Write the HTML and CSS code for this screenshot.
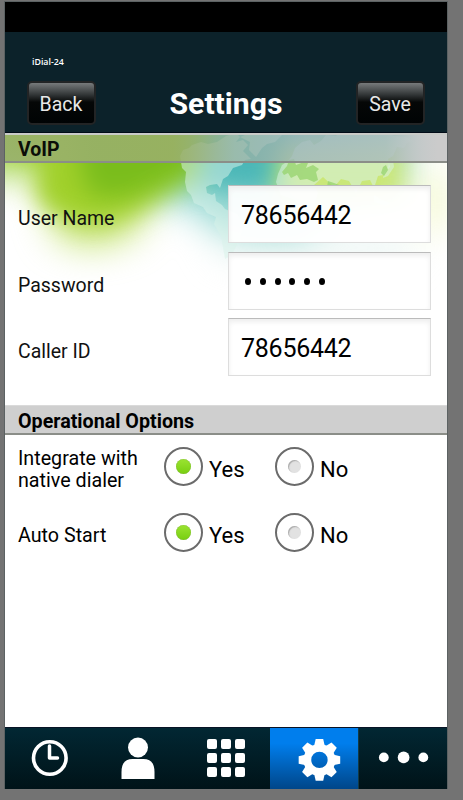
FILE: index.html
```html
<!DOCTYPE html>
<html lang="en">
<head>
<meta charset="utf-8">
<title>Settings</title>
<link rel="stylesheet" href="styles.css">
</head>
<body>
<main class="phone">
  <div class="status"></div>
  <header class="header">
    <div class="app-name">iDial-24</div>
    <div class="bar">
      <button class="btn">Back</button>
      <h1 class="title">Settings</h1>
      <button class="btn">Save</button>
    </div>
  </header>
  <div class="content">
    <svg class="backdrop" width="442" height="200" viewBox="5 133 442 200" aria-hidden="true">
      <defs>
        <filter id="soft" filterUnits="userSpaceOnUse" x="-60" y="40" width="600" height="320" color-interpolation-filters="sRGB"><feGaussianBlur stdDeviation="12"/></filter>
        <filter id="haze" filterUnits="userSpaceOnUse" x="-60" y="40" width="600" height="320" color-interpolation-filters="sRGB"><feGaussianBlur stdDeviation="18"/></filter>
        <filter id="edge"><feGaussianBlur stdDeviation="0.5"/></filter>
      </defs>
      <g filter="url(#haze)">
        <path d="M-40 60H220V150L130 170L-40 178Z" fill="#a9d75a"/>
        <path d="M150 60H405V178Q330 200 300 235L215 230Q200 198 140 200Z" fill="#8ed5cf"/>
        <path d="M42 165H165L135 232Q85 258 55 232Z" fill="#c3e26c"/>
        <path d="M210 240H410V256H230Z" fill="#def0ec"/>
        <path d="M425 170h14v60h-14z" fill="#e8f39c"/>
      </g>
      <g filter="url(#soft)">
        <path d="M0 70H245L215 170Q175 190 138 210Q98 230 64 216Q34 205 36 182L45 160L0 150Z" fill="#a0d02a"/>
        <path d="M70 110H218L190 174L140 194Q88 206 84 180Z" fill="#7abd1c"/>
        <path d="M205 100H300L275 190Q235 194 198 182Z" fill="#4bb7b7"/>
        <path d="M280 145H405V205H275Z" fill="#cbe776"/>
        <path d="M285 90H405V135H285Z" fill="#75bdc4"/>
      </g>
      <g fill="#d9f1e9" fill-opacity=".52" filter="url(#edge)">
        <path d="M180 156l3-6 6-2 3-3 9-3 7 2 9-2 9-6 10-3 4 4-4 5 7-2 5 5-5 6 8 8-6 1-3 5-9 3-5 8-5 3-3 9-3-4-7 1-4 2 1 6 5 2 3-2 1 8 6 4 3 4 12 5 7 12-5 14-7 15-7 4-4-23-7-12 2-7-9-4-4-6-9-4-3-8-4-4-2-9 1-10-4-4z"/>
        <path d="M240 137l10-4 17-2 15 4-7 7-8 2-5 4-6 9-7-7 1-8z"/>
        <path d="M278 174l4-9 6-4 4-5 3-8 7-6 8-2 4 5 7-4 5-6 10 1 5-5 9 1 11-3 10 4 14-1 9 4 12 1 7 4-6 2-3 5-7-1-4 9-5 3 2 8-7 8-5 1-4 12-4-8-8 1-6 12-7-12-8-2-7 8-11-10-9 8 4 8-4 12-8 17-10-22-15-5-5-13z"/>
        <path d="M389 162l4-2 1 7-6 9-5 2 1-6 4-3zM374 195l8 5 9 3-5 3-12-4z"/>
      </g>
      <path d="M282 172l5-6 2-6 5-1 2 6 8-3 4 1-2 5 7-3 6 4-3 3 2 8-4 2-7-3-7 1-3-5-6 3-3-5-4 2z M327 187l1-6 6 2 8 3 9 1-5 3z M383 167l3-2 2 5-4 6-3-3z" fill="#95d36c" fill-opacity=".75"/>
    </svg>
    <section class="voip">
      <h2 class="section-title">VoIP</h2>
      <div class="fields">
        <div class="field"><label for="user">User Name</label><input id="user" value="78656442"></div>
        <div class="field"><label for="password">Password</label><div class="password" id="password"><i></i><i></i><i></i><i></i><i></i><i></i></div></div>
        <div class="field"><label for="caller">Caller ID</label><input id="caller" value="78656442"></div>
      </div>
    </section>
    <section class="options">
      <h2 class="section-title operational">Operational Options</h2>
      <div class="option"><span class="name integrate">Integrate with<br>native dialer</span><span class="radio on"></span><span class="choice">Yes</span><span class="radio"></span><span class="choice">No</span></div>
      <div class="option"><span class="name auto">Auto Start</span><span class="radio on"></span><span class="choice">Yes</span><span class="radio"></span><span class="choice">No</span></div>
    </section>
  </div>
  <nav class="tabs">
    <svg viewBox="5 728 89 61"><circle cx="49.800" cy="758" r="16.300" fill="none" stroke="#fff" stroke-width="3.600"/><path d="M49.500 746v12h8" fill="none" stroke="#fff" stroke-width="3.500" stroke-linecap="round" stroke-linejoin="round"/></svg>
    <svg viewBox="94 728 88 61"><circle cx="138" cy="747.500" r="10" fill="#fff"/><path d="M121.500 779v-7q0-13 11-13h11q11 0 11 13v7z" fill="#fff"/></svg>
    <svg viewBox="182 728 88 61"><g fill="#fff"><rect x="207" y="739" width="10" height="10" rx="2"/><rect x="221" y="739" width="10" height="10" rx="2"/><rect x="235" y="739" width="10" height="10" rx="2"/><rect x="207" y="753" width="10" height="10" rx="2"/><rect x="221" y="753" width="10" height="10" rx="2"/><rect x="235" y="753" width="10" height="10" rx="2"/><rect x="207" y="767" width="10" height="10" rx="2"/><rect x="221" y="767" width="10" height="10" rx="2"/><rect x="235" y="767" width="10" height="10" rx="2"/></g></svg>
    <svg class="active" viewBox="270 728 89 61">
      <defs><path id="tooth" d="M-5.500-13.500L-3.800-21H3.800L5.500-13.500z" fill="#fff"/></defs>
      <g transform="translate(320 759.900)">
        <circle r="12.200" fill="none" stroke="#fff" stroke-width="7.800"/>
        <use href="#tooth"/><use href="#tooth" transform="rotate(45)"/><use href="#tooth" transform="rotate(90)"/><use href="#tooth" transform="rotate(135)"/><use href="#tooth" transform="rotate(180)"/><use href="#tooth" transform="rotate(225)"/><use href="#tooth" transform="rotate(270)"/><use href="#tooth" transform="rotate(315)"/>
      </g>
    </svg>
    <svg viewBox="359 728 88 61"><g fill="#fff"><circle cx="383.800" cy="757.400" r="4.900"/><circle cx="403.600" cy="757.400" r="5.900"/><circle cx="423.300" cy="757.400" r="4.900"/></g></svg>
  </nav>
</main>
</body>
</html>
```

FILE: styles.css
```css
* { box-sizing: border-box; }
body {
  margin: 0;
  height: 800px;
  padding: 1px 15px 10px 4px;
  background: #737373;
  font-family: Roboto, sans-serif;
  overflow: hidden;
}
.phone {
  width: 444px;
  height: 788px;
  display: flex;
  flex-direction: column;
  border: 1px solid #5c6263;
  border-bottom: 0;
  background: #fff;
}
.status { height: 30px; background: #000; }
.header { height: 101px; background: #0c222a; border-bottom: 1px solid #020c18; padding: 24px 22px 0; }
.app-name { height: 25px; padding-left: 5px; font: 600 8.800px/12px "Open Sans", sans-serif; color: #fff; }
.bar { display: flex; justify-content: space-between; align-items: center; height: 44px; }
.btn {
  width: 69px;
  height: 44px;
  padding: 2px 1px 0 0;
  border: 2px solid #222425;
  border-radius: 5px;
  background: linear-gradient(#777a7b, #35393a 28%, #050707 48%, #000304);
  color: #e8e8e8;
  font: 19.500px Roboto, sans-serif;
}
.title { margin: 0; padding-top: 2px; font-size: 30.200px; line-height: 44px; color: #fff; }
.content { position: relative; height: 594px; overflow: hidden; }
.backdrop { position: absolute; top: 0; left: 0; }
.voip, .options { position: relative; }
.voip { height: 272px; }
.section-title {
  height: 30px;
  margin: 0;
  padding-left: 13px;
  border-top: 2px solid #c9cbc8;
  border-bottom: 2px solid #8b8e88;
  background: linear-gradient(90deg, rgba(152, 176, 108, .9), rgba(154, 176, 104, .9) 38%, rgba(155, 178, 160, .75) 52%, rgba(156, 178, 184, .75) 66%, rgba(165, 182, 184, .75) 86%, #cbcbcb 98%);
  font-size: 19.500px;
  line-height: 29px;
  color: #0b0d08;
}
.section-title.operational { border-top: 1px solid #dadada; background: #cfcfcf; color: #000; font-size: 19.700px; line-height: 31px; }
.fields { display: grid; gap: 9px; padding: 22px 16px 0 13px; }
.field { display: flex; justify-content: space-between; height: 57.500px; }
.field label { font-size: 19.500px; line-height: 67px; color: #111; }
.field input, .password {
  width: 203px;
  height: 58px;
  border: 1px solid #ddd;
  border-top: 1px solid #bbb;
  border-radius: 0;
  padding: 2px 12px 0;
  background: rgba(255, 255, 255, .95);
  box-shadow: inset 0 3px 5px #eee;
  font: 25px Roboto, sans-serif;
  letter-spacing: -.25px;
  color: #000;
}
.password { display: flex; gap: 8.800px; padding: 25px 16px 0; }
.password i { width: 6px; height: 7px; border-radius: 50%; background: #000; }
.option { display: flex; height: 66px; padding: 12px 0 0 13px; }
.name { width: 146px; font-size: 19.700px; line-height: 22px; padding-top: 1px; }
.name.auto { padding-top: 12px; }
.radio {
  display: grid;
  place-items: center;
  width: 39px;
  height: 39px;
  border: 2px solid #6b6b6b;
  border-radius: 50%;
}
.radio::after { content: ""; width: 13px; height: 13px; border-radius: 50%; background: #e2e2e2; box-shadow: inset 1px 1px 1px #aaa; }
.radio.on::after { width: 15px; height: 15px; background: linear-gradient(#9be431, #78ce11); box-shadow: inset 0 0 1px #789c45; }
.choice { width: 72px; padding-left: 6px; font-size: 22px; line-height: 45px; }
.tabs { display: grid; grid-template-columns: 89px 88px 88px 89px 88px; height: 62px; border-top: 1px solid #081325; background: linear-gradient(#022733, #001318); }
.tabs svg { width: 100%; height: 61px; }
.tabs .active { background: linear-gradient(#007eed 25%, #004689); border-right: 1px solid #123a45; }
```
